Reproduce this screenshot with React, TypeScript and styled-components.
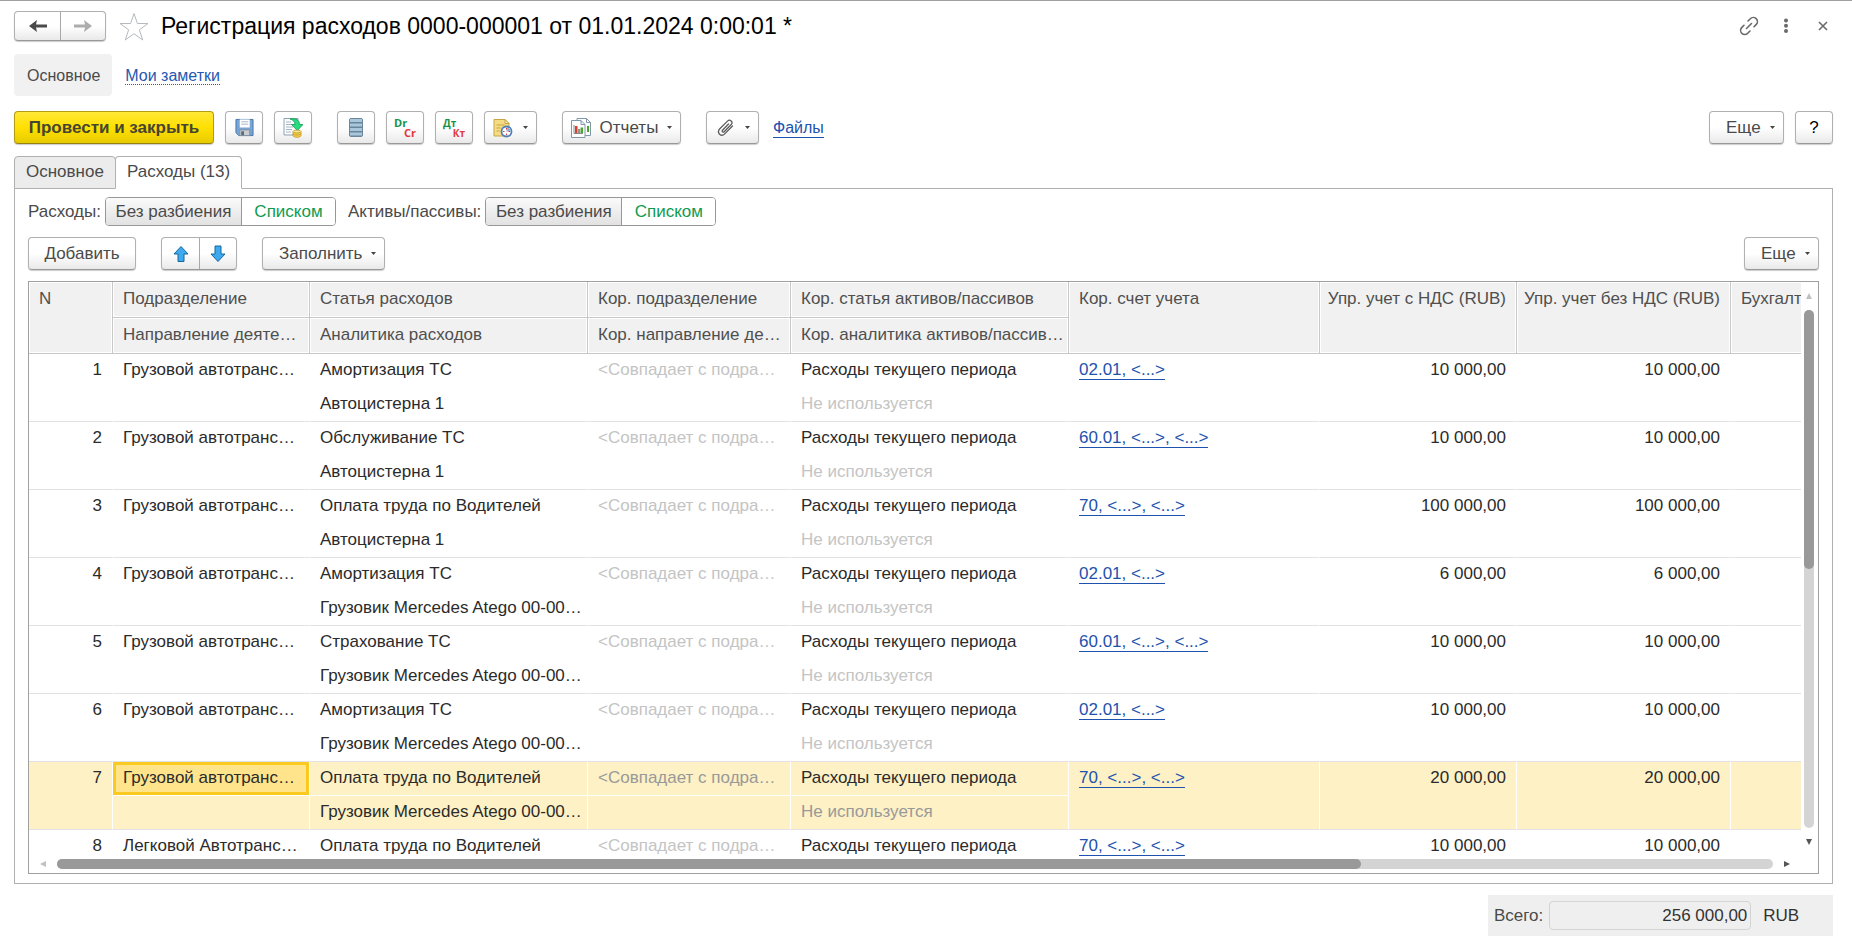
import React from "react";
import styled, { createGlobalStyle, css } from "styled-components";

const GlobalStyle = createGlobalStyle`
  *, *::before, *::after { box-sizing: border-box; }
  body {
    margin: 0;
    background: #fff;
    color: #4a4a4a;
    font: 17px/20px Arial, "Liberation Sans", sans-serif;
  }
  button, input { font: inherit; color: inherit; }
`;

const Page = styled.div`
  display: flex;
  flex-direction: column;
  height: 100vh;
  min-height: 480px;
  padding: 10px 19px 13px 14px;
  border-top: 1px solid #a0a0a0;
`;

const TitleBar = styled.header`
  display: flex;
  align-items: center;
  height: 30px;
`;

const raised = css`
  border: 1px solid #b0b0b0;
  border-bottom-color: #989898;
  border-radius: 4px;
  background: linear-gradient(#fff 50%, #e9e9e9);
  box-shadow: 0 1px 1px rgba(0, 0, 0, 0.2);
`;

const ButtonPair = styled.div<{ $gap?: number }>`
  ${raised}
  display: flex;
  height: ${(p) => (p.$gap === undefined ? 30 : 33)}px;
  margin-left: ${(p) => p.$gap ?? 0}px;
`;

const PairButton = styled.button<{ $wide?: boolean }>`
  display: flex;
  align-items: center;
  justify-content: center;
  width: ${(p) => (p.$wide ? 45 : 37)}px;
  padding: 0;
  border: 0;
  background: none;
  & + & {
    border-left: 1px solid ${(p) => (p.$wide ? "#d6d6d6" : "#a8a8a8")};
  }
`;

const StarButton = styled.button`
  display: flex;
  margin: 0 12px 0 13px;
  padding: 0;
  border: 0;
  background: none;
`;

const Title = styled.h1`
  margin: 0;
  font-size: 23px;
  line-height: 28px;
  font-weight: 400;
  color: #000;
  white-space: nowrap;
`;

const Spacer = styled.div`
  flex: 1;
`;

const WindowButton = styled.button`
  display: flex;
  align-items: center;
  justify-content: center;
  width: 20px;
  height: 20px;
  margin-left: 17px;
  padding: 0;
  border: 0;
  background: none;
`;

const Sections = styled.nav`
  display: flex;
  align-items: center;
  gap: 13px;
  margin-top: 13px;
  font-size: 16px;
`;

const CurrentSection = styled.span`
  padding: 12px 12px 10px 13px;
  border-radius: 4px;
  background: #f1f1f1;
`;

const DottedLink = styled.a`
  padding-top: 2px;
  line-height: 17px;
  color: #2558b0;
  text-decoration: none;
  border-bottom: 1px dotted #2558b0;
`;

const Link = styled.a`
  display: inline-block;
  line-height: 18px;
  color: #1d52ae;
  text-decoration: none;
  border-bottom: 1px solid #1d52ae;
`;

const Toolbar = styled.div`
  display: flex;
  align-items: center;
  margin-top: 15px;
`;

const Button = styled.button<{ $width: number; $gap?: number }>`
  ${raised}
  display: flex;
  align-items: center;
  justify-content: center;
  flex: none;
  width: ${(p) => p.$width}px;
  height: 33px;
  margin-left: ${(p) => p.$gap ?? 0}px;
  padding: 0;
  white-space: nowrap;
`;

const MenuButton = styled(Button)<{ $icon?: boolean }>`
  justify-content: space-between;
  padding: 0 8px 0 ${(p) => (p.$icon ? 8 : 16)}px;
`;

const PrimaryButton = styled(Button)`
  border-color: #b29c12;
  border-bottom-color: #94820c;
  background: linear-gradient(#ffe838, #ffe000 50%, #e8cb00);
  font-weight: 700;
  color: #454532;
`;

const HelpButton = styled(Button)`
  color: #000;
`;

const ToolLink = styled(Link)`
  margin-left: 14px;
  padding-top: 1px;
  font-size: 16px;
`;

const Tabs = styled.div`
  display: flex;
  margin-top: 12px;
`;

const Tab = styled.button<{ $active?: boolean }>`
  height: 33px;
  margin: 0 0 -1px ${(p) => (p.$active ? -1 : 0)}px;
  padding: 0 11px 2px;
  border: 1px solid #b0b0b0;
  border-bottom-color: ${(p) => (p.$active ? "#fff" : "#b0b0b0")};
  border-radius: 4px 4px 0 0;
  background: ${(p) => (p.$active ? "#fff" : "#ececec")};
  z-index: 1;
`;

const Panel = styled.main`
  display: flex;
  flex-direction: column;
  flex: 1;
  min-height: 0;
  padding: 8px 13px 9px;
  border: 1px solid #b0b0b0;
`;

const Filters = styled.div`
  display: flex;
  align-items: center;
`;

const FilterGroup = styled.div`
  display: flex;
  align-items: center;
  gap: 4px;
  margin-right: 12px;
`;

const Segments = styled.div`
  display: flex;
  height: 29px;
  border: 1px solid #979797;
  border-radius: 4px;
  overflow: hidden;
`;

const Segment = styled.button<{ $active?: boolean }>`
  width: ${(p) => (p.$active ? 94 : 135)}px;
  padding: 0;
  border: 0;
  background: ${(p) => (p.$active ? "#fff" : "linear-gradient(#fafafa, #e2e2e2)")};
  color: ${(p) => (p.$active ? "#0f9b4e" : "inherit")};
  & + & {
    border-left: 1px solid #979797;
  }
`;

const Commands = styled.div`
  display: flex;
  align-items: center;
  margin-top: 11px;
`;

const Grid = styled.div`
  display: grid;
  grid-template-columns: minmax(0, 1fr) 17px;
  grid-template-rows: minmax(0, 1fr) 16px;
  flex: 1;
  min-height: 0;
  margin-top: 11px;
  border: 1px solid #a0a0a0;
`;

const Viewport = styled.div`
  overflow: hidden;
`;

const Table = styled.table`
  width: 1972px;
  table-layout: fixed;
  border-collapse: separate;
  border-spacing: 0;
  color: #2b2b2b;
`;

const HeadCell = styled.th<{ $right?: boolean }>`
  height: 36px;
  padding: 7px 10px 7px ${(p) => (p.$right ? 4 : 10)}px;
  border-right: 1px solid #c8c8c8;
  border-bottom: 1px solid #c8c8c8;
  background: #f1f1f1;
  box-shadow: inset 0 0 0 1px #fff;
  font-weight: 400;
  color: #4f4f4f;
  text-align: ${(p) => (p.$right ? "right" : "left")};
  vertical-align: top;
  white-space: nowrap;
`;

const Cell = styled.td<{ $end?: boolean; $right?: boolean; $muted?: boolean; $selected?: boolean }>`
  height: 34px;
  padding: 6px 10px;
  border-bottom: ${(p) => (p.$end ? "1px solid #e2e2e6" : p.$selected ? "1px solid #fff" : "1px solid transparent")};
  border-right: 1px solid ${(p) => (p.$selected ? "#fff" : "transparent")};
  background: ${(p) => (p.$selected ? "#fdf1c5" : "#fff")};
  background-clip: padding-box;
  color: ${(p) => (p.$muted ? (p.$selected ? "#999" : "#c4c4c4") : "inherit")};
  text-align: ${(p) => (p.$right ? "right" : "left")};
  vertical-align: top;
  white-space: nowrap;
`;

const FocusedCell = styled(Cell)`
  background: #ffe48c;
  box-shadow: inset 0 0 0 3px #fbca21;
`;

const VerticalBar = styled.div`
  display: flex;
  flex-direction: column;
  align-items: center;
  padding: 11px 2px 12px 0;
  gap: 11px;
`;

const HorizontalBar = styled.div`
  display: flex;
  align-items: center;
  padding: 0 11px 2px;
  gap: 11px;
`;

const Track = styled.div`
  display: flex;
  flex: 1;
  min-height: 0;
  min-width: 10px;
  border-radius: 5px;
  background: #d4d4d4;
`;

const VerticalThumb = styled.div`
  width: 10px;
  height: 50%;
  border-radius: 5px;
  background: #999;
`;

const HorizontalThumb = styled.div`
  width: 76%;
  height: 10px;
  border-radius: 5px;
  background: #999;
`;

const Totals = styled.footer`
  display: flex;
  align-items: center;
  align-self: flex-end;
  gap: 6px;
  width: 345px;
  height: 41px;
  margin-top: 11px;
  padding: 0 6px;
  background: #efefef;
`;

const TotalInput = styled.input`
  width: 202px;
  height: 29px;
  padding: 0 3px;
  border: 1px solid #d4d4d4;
  border-radius: 4px;
  background: #efefef;
  color: #333;
  text-align: right;
`;

const Currency = styled.span`
  margin-left: 6px;
  color: #333;
`;

const Caret = () => (
  <svg width="5" height="3" viewBox="0 0 5 3"><path d="M0 0h5L2.5 3z" fill="#444" /></svg>
);

const ScrollArrow = ({ d, color }: { d: string; color: string }) => (
  <svg width="6" height="6" viewBox="0 0 6 6" aria-hidden="true"><path d={d} fill={color} /></svg>
);

const NavArrow = ({ back }: { back?: boolean }) => (
  <svg width="18" height="12" viewBox="0 0 18 12">
    <path
      d={back ? "M0 6 8 0 7 4.5h11v3H7L8 12z" : "M18 6 10 0l1 4.5H0v3h11L10 12z"}
      fill={back ? "#4a4a4a" : "#acacac"}
    />
  </svg>
);

const MoveArrow = ({ down }: { down?: boolean }) => (
  <svg width="16" height="18" viewBox="0 0 16 18">
    <path
      d={down ? "M5 1h6v8h4L8 16.500 1 9h4z" : "M8 1.500 15 9h-4v7.500H5V9H1z"}
      fill="#3fa9f0"
      stroke="#14699c"
      strokeWidth="1"
    />
  </svg>
);

const StarIcon = () => (
  <svg width="30" height="29" viewBox="0 0 30 29">
    <path
      d="m15 1.500 3.400 10h10.600l-8.600 6.300 3.300 10.200L15 21.700l-8.700 6.300 3.300-10.200-8.600-6.300h10.600z"
      fill="#fff"
      stroke="#b4bac0"
    />
  </svg>
);

const LinkIcon = () => (
  <svg width="20" height="20" viewBox="0 0 20 20" fill="none" stroke="#6a6a6a" strokeWidth="1.600" strokeLinecap="round">
    <path d="m9 5 2.300-2.200a4 4 0 0 1 6 5.600L15 10.700M11 15l-2.300 2.200a4 4 0 0 1-6-5.600L5 9.300M7.500 12.500l5-5" />
  </svg>
);

const MoreIcon = () => (
  <svg width="6" height="16" viewBox="0 0 6 16" fill="#6a6a6a">
    <circle cx="3" cy="2.500" r="2" /><circle cx="3" cy="7.700" r="2" /><circle cx="3" cy="12.900" r="2" />
  </svg>
);

const CloseIcon = () => (
  <svg width="10" height="10" viewBox="0 0 10 10" stroke="#6a6a6a" strokeWidth="1.600">
    <path d="m1 1 8 8M9 1 1 9" />
  </svg>
);

const SaveIcon = () => (
  <svg width="19" height="19" viewBox="0 0 20 20">
    <path d="M1 1.500h18v17H4l-3-3z" fill="#79a5d6" stroke="#4674a6" />
    <path d="M5 1.500h10.500v8.500H5z" fill="#fff" />
    <path d="M6.500 4h7.500M6.500 6.500h7.500" stroke="#9fb6cc" />
    <path d="M5 12.500h10.500v6H5z" fill="#c9cdd0" stroke="#7d8f9f" />
    <path d="M6.500 14h3v4h-3z" fill="#5a6b7b" />
  </svg>
);

const PostIcon = () => (
  <svg width="20" height="21" viewBox="0 0 20 21">
    <path d="M1 1.500h14v16.500H1z" fill="#fbfcfd" stroke="#8fa3b3" />
    <path d="M3 5h5M3 7.500h6M3 10h7M3 12.500h6M3 15h5" stroke="#a9b6c2" />
    <path d="M7 2c6-1 9.500 1 9.500 5.500H20L14.300 13.500 8.500 7.500H12C12 4.500 10 2.800 7 2z" fill="#27dc80" stroke="#129a50" strokeWidth=".8" />
    <path d="M10 14.500v4c0 2.400 8 2.400 8 0v-4z" fill="#f5cf4f" stroke="#b98f1c" strokeWidth=".7" />
    <ellipse cx="14" cy="14.500" rx="4" ry="1.400" fill="#ffeb96" stroke="#b98f1c" strokeWidth=".7" />
    <path d="M10 16.500c0 2 8 2 8 0" fill="none" stroke="#b98f1c" strokeWidth=".7" />
  </svg>
);

const StackIcon = () => (
  <svg width="14" height="19" viewBox="0 0 14 19">
    <rect x=".5" y=".5" width="13" height="18" rx="1.500" fill="#66869c" stroke="#6b8799" />
    <path d="M1 2.500h12M1 7h12M1 11.500h12M1 16h12" stroke="#a9c6da" strokeWidth="3" />
  </svg>
);

const EntriesIcon = ({ top, bottom, size }: { top: string; bottom: string; size: number }) => (
  <svg width="24" height="24" viewBox="0 0 24 24" fontFamily='"Open Sans", "Noto Sans", sans-serif' fontWeight="700" fontSize={size}>
    <text x="1" y="11" fill="#159447">{top}</text>
    <text x="23" y="21" textAnchor="end" fill="#e0393e">{bottom}</text>
  </svg>
);

const NoteClockIcon = () => (
  <svg width="20" height="20" viewBox="0 0 20 20">
    <path d="M1 1.500h11l4 4v12.500H1z" fill="#f5dc84" stroke="#c6a545" />
    <path d="M12 1.500v4h4z" fill="#fbf0c0" stroke="#c6a545" />
    <path d="M3.500 7h8M3.500 10h4M3.500 13h3" stroke="#c6a545" />
    <circle cx="13.500" cy="13.500" r="5" fill="#fff" stroke="#4f7fb5" strokeWidth="1.800" />
    <path d="M13.500 13.500V9.500a4 4 0 0 1 4 4z" fill="#8fb2dc" />
    <path d="M10 13.500h1.500M15.500 13.500H17M13.500 15.500V17M13.500 10v1.500" stroke="#e0393e" />
  </svg>
);

const ReportsIcon = () => (
  <svg width="20" height="20" viewBox="0 0 20 20">
    <path d="M6 .5h9.500l4 4v13H6z" fill="#fff" stroke="#7f98aa" />
    <path d="M15.500.500v4h4" fill="none" stroke="#7f98aa" />
    <path d="M16 8h2v6h-2z" fill="#49a82c" />
    <path d="M.5 2.500h9.500l4 4v13H.5z" fill="#fff" stroke="#7f98aa" />
    <path d="M10 2.500v4h4" fill="none" stroke="#7f98aa" />
    <path d="M3 7v8.500h9" fill="none" stroke="#8a8a8a" />
    <path d="M4 8h2.500v7H4z" fill="#e03b2f" />
    <path d="M7.200 11h1.600v4H7.200z" fill="#777" />
    <path d="M9.500 9.500H12V15H9.500z" fill="#49a82c" />
  </svg>
);

const ClipIcon = () => (
  <svg width="20" height="17" viewBox="-2 0 20 17" fill="none" stroke="#5c5c5c" strokeWidth="1.300" strokeLinecap="round">
    <path d="m11.500 5-6 6.200c-1 1.200.6 2.600 1.700 1.500l7-7.200c2.300-2.600-1.200-5.800-3.700-3.400L2.800 9.800c-3.600 4 1.400 8.600 4.900 5.100L15.500 7" />
  </svg>
);

type Entry = [department: string, item: string, analytics: string, account: string, sum: string];

const truck = "Грузовой автотранс…";
const tanker = "Автоцистерна 1";
const atego = "Грузовик Mercedes Atego 00-00…";

const entries: Entry[] = [
  [truck, "Амортизация ТС", tanker, "02.01, <...>", "10 000,00"],
  [truck, "Обслуживание ТС", tanker, "60.01, <...>, <...>", "10 000,00"],
  [truck, "Оплата труда по Водителей", tanker, "70, <...>, <...>", "100 000,00"],
  [truck, "Амортизация ТС", atego, "02.01, <...>", "6 000,00"],
  [truck, "Страхование ТС", atego, "60.01, <...>, <...>", "10 000,00"],
  [truck, "Амортизация ТС", atego, "02.01, <...>", "10 000,00"],
  [truck, "Оплата труда по Водителей", atego, "70, <...>, <...>", "20 000,00"],
  ["Легковой Автотранс…", "Оплата труда по Водителей", "", "70, <...>, <...>", "10 000,00"],
];

const selectedIndex = 6;
const columnWidths = [84, 197, 278, 203, 278, 251, 197, 214, 270];

const EntryRows = ({ entry, index }: { entry: Entry; index: number }) => {
  const [department, item, analytics, account, sum] = entry;
  const s = index === selectedIndex;
  const DepartmentCell = s ? FocusedCell : Cell;
  return (
    <>
      <tr>
        <Cell rowSpan={2} $end $right $selected={s}>{index + 1}</Cell>
        <DepartmentCell $selected={s}>{department}</DepartmentCell>
        <Cell $selected={s}>{item}</Cell>
        <Cell $selected={s} $muted>{"<Совпадает с подра…"}</Cell>
        <Cell $selected={s}>Расходы текущего периода</Cell>
        <Cell rowSpan={2} $end $selected={s}><Link href="#account">{account}</Link></Cell>
        <Cell rowSpan={2} $end $right $selected={s}>{sum}</Cell>
        <Cell rowSpan={2} $end $right $selected={s}>{sum}</Cell>
        <Cell rowSpan={2} $end $selected={s} />
      </tr>
      <tr>
        <Cell $end $selected={s} />
        <Cell $end $selected={s}>{analytics}</Cell>
        <Cell $end $selected={s} />
        <Cell $end $selected={s} $muted>{index < 7 ? "Не используется" : ""}</Cell>
      </tr>
    </>
  );
};

const Split = ({ label }: { label: string }) => (
  <FilterGroup role="group" aria-label={label}>
    <span>{label}</span>
    <Segments>
      <Segment type="button">Без разбиения</Segment>
      <Segment type="button" $active aria-pressed="true">Списком</Segment>
    </Segments>
  </FilterGroup>
);

export default function App() {
  return (
    <>
      <GlobalStyle />
      <Page>
        <TitleBar>
          <ButtonPair>
            <PairButton $wide type="button" aria-label="Назад"><NavArrow back /></PairButton>
            <PairButton $wide type="button" aria-label="Вперед"><NavArrow /></PairButton>
          </ButtonPair>
          <StarButton type="button" aria-label="В избранное"><StarIcon /></StarButton>
          <Title>Регистрация расходов 0000-000001 от 01.01.2024 0:00:01 *</Title>
          <Spacer />
          <WindowButton type="button" aria-label="Ссылка"><LinkIcon /></WindowButton>
          <WindowButton type="button" aria-label="Меню"><MoreIcon /></WindowButton>
          <WindowButton type="button" aria-label="Закрыть"><CloseIcon /></WindowButton>
        </TitleBar>

        <Sections>
          <CurrentSection>Основное</CurrentSection>
          <DottedLink href="#notes">Мои заметки</DottedLink>
        </Sections>

        <Toolbar>
          <PrimaryButton type="button" $width={200}>Провести и закрыть</PrimaryButton>
          <Button type="button" $width={38} $gap={11} aria-label="Записать"><SaveIcon /></Button>
          <Button type="button" $width={38} $gap={11} aria-label="Провести"><PostIcon /></Button>
          <Button type="button" $width={38} $gap={25} aria-label="Движения"><StackIcon /></Button>
          <Button type="button" $width={38} $gap={11}><EntriesIcon top="Dr" bottom="Cr" size={11} /></Button>
          <Button type="button" $width={38} $gap={11}><EntriesIcon top="Дт" bottom="Кт" size={10} /></Button>
          <MenuButton type="button" $icon $width={53} $gap={11} aria-label="Создать на основании"><NoteClockIcon /><Caret /></MenuButton>
          <MenuButton type="button" $icon $width={119} $gap={25}><ReportsIcon />Отчеты<Caret /></MenuButton>
          <MenuButton type="button" $icon $width={53} $gap={25} aria-label="Прикрепить"><ClipIcon /><Caret /></MenuButton>
          <ToolLink href="#files">Файлы</ToolLink>
          <Spacer />
          <MenuButton type="button" $width={75}>Еще<Caret /></MenuButton>
          <HelpButton type="button" $width={38} $gap={11}>?</HelpButton>
        </Toolbar>

        <Tabs role="tablist">
          <Tab type="button" role="tab">Основное</Tab>
          <Tab type="button" role="tab" $active aria-selected="true">Расходы (13)</Tab>
        </Tabs>

        <Panel>
          <Filters>
            <Split label="Расходы:" />
            <Split label="Активы/пассивы:" />
          </Filters>

          <Commands>
            <Button type="button" $width={108}>Добавить</Button>
            <ButtonPair $gap={25}>
              <PairButton type="button" aria-label="Вверх"><MoveArrow /></PairButton>
              <PairButton type="button" aria-label="Вниз"><MoveArrow down /></PairButton>
            </ButtonPair>
            <MenuButton type="button" $width={123} $gap={25}>Заполнить<Caret /></MenuButton>
            <Spacer />
            <MenuButton type="button" $width={75}>Еще<Caret /></MenuButton>
          </Commands>

          <Grid>
            <Viewport>
              <Table>
                <colgroup>
                  {columnWidths.map((width, i) => <col key={i} style={{ width }} />)}
                </colgroup>
                <thead>
                  <tr>
                    <HeadCell rowSpan={2}>N</HeadCell>
                    <HeadCell>Подразделение</HeadCell>
                    <HeadCell>Статья расходов</HeadCell>
                    <HeadCell>Кор. подразделение</HeadCell>
                    <HeadCell>Кор. статья активов/пассивов</HeadCell>
                    <HeadCell rowSpan={2}>Кор. счет учета</HeadCell>
                    <HeadCell rowSpan={2} $right>Упр. учет с НДС (RUB)</HeadCell>
                    <HeadCell rowSpan={2} $right>Упр. учет без НДС (RUB)</HeadCell>
                    <HeadCell rowSpan={2}>Бухгалт</HeadCell>
                  </tr>
                  <tr>
                    <HeadCell>Направление деяте…</HeadCell>
                    <HeadCell>Аналитика расходов</HeadCell>
                    <HeadCell>Кор. направление де…</HeadCell>
                    <HeadCell>Кор. аналитика активов/пассив…</HeadCell>
                  </tr>
                </thead>
                <tbody>
                  {entries.map((entry, i) => <EntryRows key={i} entry={entry} index={i} />)}
                </tbody>
              </Table>
            </Viewport>
            <VerticalBar aria-hidden="true">
              <ScrollArrow d="M3 0 6 6H0z" color="#c0c0c0" />
              <Track><VerticalThumb /></Track>
              <ScrollArrow d="M3 6 6 0H0z" color="#555" />
            </VerticalBar>
            <HorizontalBar aria-hidden="true">
              <ScrollArrow d="M0 3 6 0v6z" color="#c0c0c0" />
              <Track><HorizontalThumb /></Track>
              <ScrollArrow d="M6 3 0 0v6z" color="#555" />
            </HorizontalBar>
          </Grid>
        </Panel>

        <Totals>
          <label htmlFor="total">Всего:</label>
          <TotalInput id="total" readOnly value="256 000,00" />
          <Currency>RUB</Currency>
        </Totals>
      </Page>
    </>
  );
}
